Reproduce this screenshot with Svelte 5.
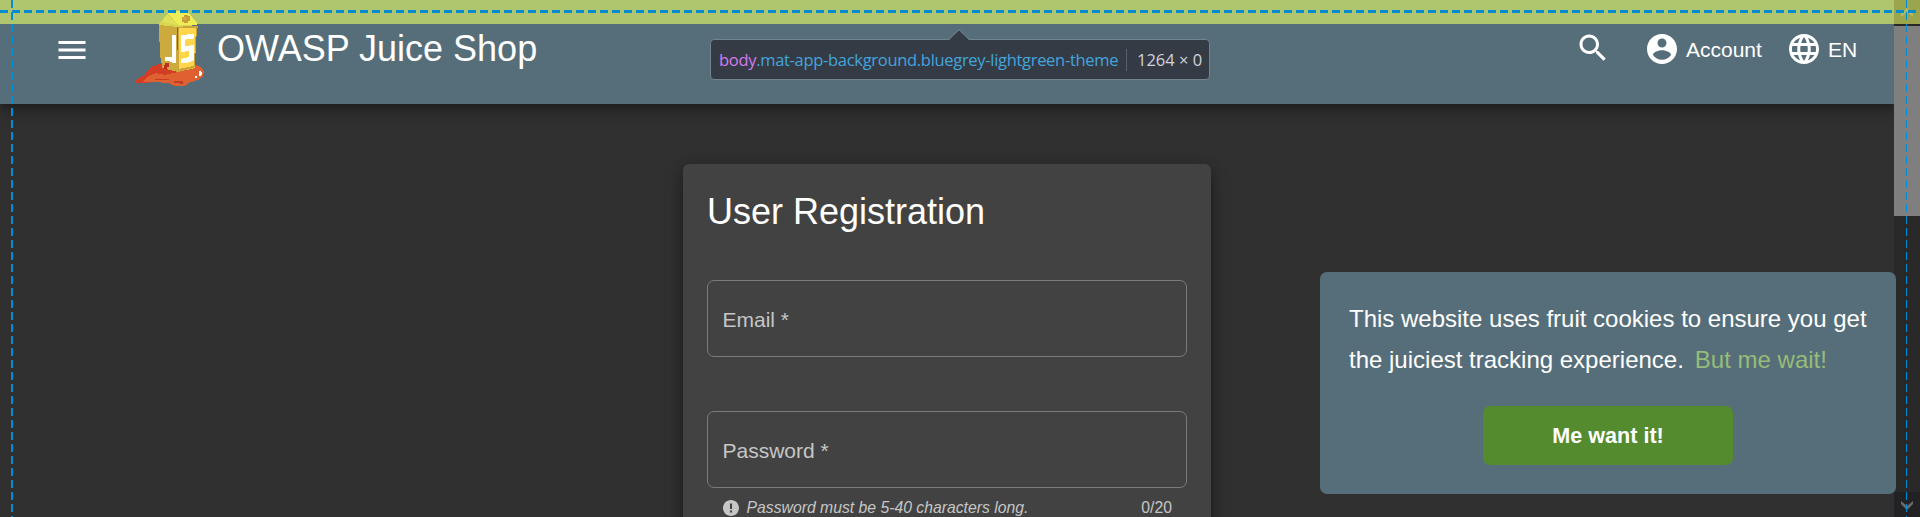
<script>
  const fields = [
    { label: 'Email *', hint: '', count: '' },
    { label: 'Password *', hint: 'Password must be 5-40 characters long.', count: '0/20' }
  ];
</script>

<div class="screen">
  <main class="page">
    <div class="margin-band"></div>
    <header>
      <svg class="icon menu" viewBox="0 0 24 24"><path d="M3 18h18v-2H3v2zm0-5h18v-2H3v2zm0-7v2h18V6H3z" /></svg>
      <svg class="logo" viewBox="0 0 70 80" shape-rendering="crispEdges">
        <path fill="#d33d23" d="M0 74V72L3 69L10 66L12 62L18 57L24 55L44 54L60 57L66 62L62 69L51 76L41 76L34 72L22 72L12 74Z" />
        <path fill="#df6030" d="M7 73L14 67L21 64L30 66L43 63L59 56L64 57L67 59L69 63L68 68L63 71L56 73L49 77H40L34 74L17 73Z" />
        <path fill="#c63b23" d="M20 70h14v1H20zM39 72h9v3h-3v-1h-6z" />
        <path fill="#cdaa3d" d="M24 16L42 18L43 63L27 59L26 49H25Z" />
        <path fill="#ffd549" d="M43 18H62V27H61V44H60V59L43 63Z" />
        <path fill="#caa43c" d="M43 17H63V19H43zM43 18h1v45h-1zM61 19h1v8h-1zM60 28h1v15h-1zM59 44h1v14h-1zM43 60l16-3v2l-16 4z" />
        <path fill="#d8d651" d="M24 15L33 4L34 0H37V2H51L54 4L62 14V16L43 18L24 16Z" />
        <path fill="#efee57" d="M33 4L36 2H52L62 14V16H43Z" />
        <path fill="#dfe058" d="M32 5L42 16L27 13Z" />
        <path fill="#c49d3d" d="M49 6h4v1h2v5h-2v2h-4v-1h-2V8h2z" />
        <path fill="#d5a83f" d="M48 8h4v3h-4z" />
        <path fill="#fff" d="M37 26h4v28h-3l-4-2h-4v-4h7z" />
        <path fill="#fff" d="M46 26h5l1-1h7v4l-2 1h-5l-2 1v6h4l1-1h4v14l-2 2-3 1-2 1h-6v-4l4-1 4-1v-6h-4l-1 1h-3z" />
        <path fill="#c22c20" d="M30 54h4v4h-2v2h-3v-4h1z" />
        <path fill="#fff" d="M64 62h2v1h1v3h-1v1h-2zM60 67h2v2h-2z" />
      </svg>
      <span class="brand">OWASP Juice Shop</span>
      <svg class="icon search" viewBox="0 0 24 24"><path d="M15.5 14h-.79l-.28-.27C15.41 12.59 16 11.11 16 9.5 16 5.91 13.09 3 9.5 3S3 5.91 3 9.5 5.91 16 9.5 16c1.61 0 3.09-.59 4.23-1.57l.27.28v.79l5 4.99L20.49 19l-4.99-5zm-6 0C7.01 14 5 11.99 5 9.5S7.01 5 9.5 5 14 7.01 14 9.5 11.99 14 9.5 14z" /></svg>
      <svg class="icon user" viewBox="0 0 24 24"><path d="M12 2C6.48 2 2 6.48 2 12s4.48 10 10 10 10-4.48 10-10S17.52 2 12 2zm0 3c1.66 0 3 1.34 3 3s-1.34 3-3 3-3-1.34-3-3 1.34-3 3-3zm0 14.2c-2.5 0-4.71-1.28-6-3.22.03-1.99 4-3.08 6-3.08 1.99 0 5.97 1.09 6 3.08-1.29 1.94-3.5 3.22-6 3.22z" /></svg>
      <span class="action account">Account</span>
      <svg class="icon globe" viewBox="0 0 24 24"><path d="M11.99 2C6.47 2 2 6.48 2 12s4.47 10 9.99 10C17.52 22 22 17.52 22 12S17.52 2 11.99 2zm6.93 6h-2.95c-.32-1.25-.78-2.45-1.38-3.56 1.84.63 3.37 1.91 4.33 3.56zM12 4.04c.83 1.2 1.48 2.53 1.91 3.96h-3.82c.43-1.43 1.08-2.76 1.91-3.96zM4.26 14C4.1 13.36 4 12.69 4 12s.1-1.36.26-2h3.38c-.08.66-.14 1.32-.14 2 0 .68.06 1.34.14 2H4.26zm.82 2h2.95c.32 1.25.78 2.45 1.38 3.56-1.84-.63-3.37-1.9-4.33-3.56zm2.95-8H5.08c.96-1.66 2.49-2.93 4.33-3.56C8.81 5.55 8.35 6.75 8.03 8zM12 19.96c-.83-1.2-1.48-2.53-1.91-3.96h3.82c-.43 1.43-1.08 2.76-1.91 3.96zM14.34 14H9.66c-.09-.66-.16-1.32-.16-2 0-.68.07-1.35.16-2h4.68c.09.65.16 1.32.16 2 0 .68-.07 1.34-.16 2zm.25 5.56c.6-1.11 1.06-2.31 1.38-3.56h2.95c-.96 1.65-2.49 2.93-4.33 3.56zM16.36 14c.08-.66.14-1.32.14-2 0-.68-.06-1.34-.14-2h3.38c.16.64.26 1.31.26 2s-.1 1.36-.26 2h-3.38z" /></svg>
      <span class="action">EN</span>
    </header>

    <section class="card">
      <h1>User Registration</h1>
      {#each fields as field}
        <div class="field">
          <div class="outline">{field.label}</div>
          <div class="subscript">
            {#if field.hint}
              <svg viewBox="2 2 20 20"><path d="M12 2C6.48 2 2 6.48 2 12s4.48 10 10 10 10-4.48 10-10S17.52 2 12 2zm1.3 15.5h-2.6V15h2.6v2.5zm0-4.3h-2.6V6.3h2.6v6.9z" /></svg>
              <em>{field.hint}</em>
              <span>{field.count}</span>
            {/if}
          </div>
        </div>
      {/each}
    </section>
  </main>

  <aside class="scrollbar">
    <div class="up"><svg viewBox="0 0 12 10"><path d="M0 9V6L6 0L12 6V9L6 4Z" /></svg></div>
    <div class="thumb"></div>
    <div class="down"><svg viewBox="0 0 12 10"><path d="M0 1V4L6 10L12 4V1L6 6Z" /></svg></div>
  </aside>

  <div class="cookie">
    <p>This website uses fruit cookies to ensure you get<br />the juiciest tracking experience.<a href="#wait">But me wait!</a></p>
    <button>Me want it!</button>
  </div>

  <div class="guide top"></div>
  <div class="guide left"></div>
  <div class="guide right"></div>

  <div class="tooltip">
    <svg viewBox="0 0 24 12"><path d="M0 12L11 .8L22 12Z" fill="#353b48" /><path d="M0 11L11 .8L22 11" fill="none" stroke="#72858f" /></svg>
    <span class="selector"><b>body</b>.mat-app-background.bluegrey-lightgreen-theme</span>
    <span class="size">1264 × 0</span>
  </div>
</div>

<style>
  :global(body) { margin: 0; background: #303030; }
  .screen {
    position: relative; display: grid; grid-template-columns: 1894px 26px;
    width: 1920px; height: 517px; overflow: hidden; background: #303030;
    font-family: "Liberation Sans", Arial, sans-serif; color: #fff;
  }
  .page { height: 517px; overflow: hidden; }
  .margin-band { height: 24px; background: #b0c66e; }
  header {
    display: flex; align-items: flex-start; box-sizing: border-box; height: 80px;
    padding: 7px 0 0 54px; background: #566e79;
    box-shadow: 0 5px 5px -1px rgba(0,0,0,.2), 0 12px 12px rgba(0,0,0,.16);
  }
  .icon { flex: none; width: 36px; height: 36px; fill: #fff; }
  .menu { margin-top: 1px; }
  .logo { flex: none; width: 70px; height: 80px; margin: -22px 0 0 45px; }
  .brand { width: 1358px; margin: -3px 0 0 12px; font-size: 36px; line-height: 42px; white-space: nowrap; }
  .search { margin-top: -1px; }
  .user { margin-left: 33px; }
  .action { margin: 7px 0 0 6px; font-size: 21px; line-height: 24px; }
  .account { width: 77px; }
  .globe { margin-left: 23px; }

  .card {
    box-sizing: border-box; width: 528px; height: 600px; margin: 60px 0 0 683px; padding: 24px;
    border-radius: 6px; background: #424242;
    box-shadow: 0 3px 12px rgba(0,0,0,.25), 0 8px 20px rgba(0,0,0,.22);
  }
  h1 { margin: 2px 0 46px; font-size: 36px; font-weight: 400; line-height: 44px; }
  .field { height: 131px; }
  .outline {
    box-sizing: border-box; height: 77px; padding-left: 14.5px; border: 1px solid #7b7b7b; border-radius: 7px;
    color: #c6c6c6; font-size: 21px; line-height: 77px;
  }
  .subscript { display: flex; align-items: center; padding: 11px 15px 0 16px; color: #c6c6c6; font-size: 15.75px; line-height: 18px; }
  .subscript svg { width: 16px; height: 16px; margin-right: 7.5px; fill: #c6c6c6; }
  .subscript span { margin-left: auto; }

  .scrollbar { display: flex; flex-direction: column; background: #29292a; }
  .scrollbar svg { display: block; width: 12px; height: 10px; }
  .up { height: 24px; margin-bottom: 2px; background: #9ba54d; fill: #b0bd68; }
  .up svg { margin: 8px 0 0 7px; }
  .thumb { height: 190px; background: #7f7f7f; }
  .down { height: 25px; margin-top: auto; background: #222224; fill: #6b6b6d; }
  .down svg { margin: 8px 0 0 7px; }

  .cookie {
    position: absolute; left: 1320px; top: 272px; box-sizing: border-box; width: 576px; height: 222px;
    padding: 26px 28px 26px 29px; border-radius: 7px; background: #566e79;
  }
  .cookie p { margin: 0 0 26px; font-size: 24px; line-height: 41px; white-space: nowrap; }
  .cookie a { margin-left: 11px; color: #97bb78; text-decoration: none; }
  .cookie button {
    display: block; width: 250px; height: 59px; margin-left: 134px; padding: 0; border: 0; border-radius: 7px;
    background: #558b2f; color: #fff; font: 700 21.6px "Liberation Sans", Arial, sans-serif;
  }

  .guide { position: absolute; }
  .top { left: 0; top: 10px; width: 1916px; height: 3px; background: repeating-linear-gradient(90deg, #058bd0 0 8px, transparent 8px 12px); }
  .left, .right { top: 0; height: 517px; background: repeating-linear-gradient(180deg, #058bd0 0 8px, transparent 8px 12px); }
  .left { left: 11px; width: 2px; }
  .right { left: 1906px; width: 1px; }

  .tooltip {
    position: absolute; left: 710px; top: 39px; display: flex; align-items: center; box-sizing: border-box;
    width: 500px; height: 41px; padding-left: 8px; border: 1px solid #72858f; border-radius: 4px; background: #353b45;
    font-family: "Open Sans", "Noto Sans", sans-serif; font-size: 16.5px; line-height: 22px; white-space: nowrap;
  }
  .tooltip svg { position: absolute; left: 237px; top: -11px; width: 24px; height: 12px; }
  .tooltip path:first-child { fill: #353b45; }
  .selector { width: 399px; color: #42a5dc; letter-spacing: -.305px; }
  .selector b { color: #d67af0; font-weight: 400; }
  .size { margin-left: 8px; padding-left: 10px; border-left: 1px solid #5a616e; color: #d0d2dc; }
</style>
